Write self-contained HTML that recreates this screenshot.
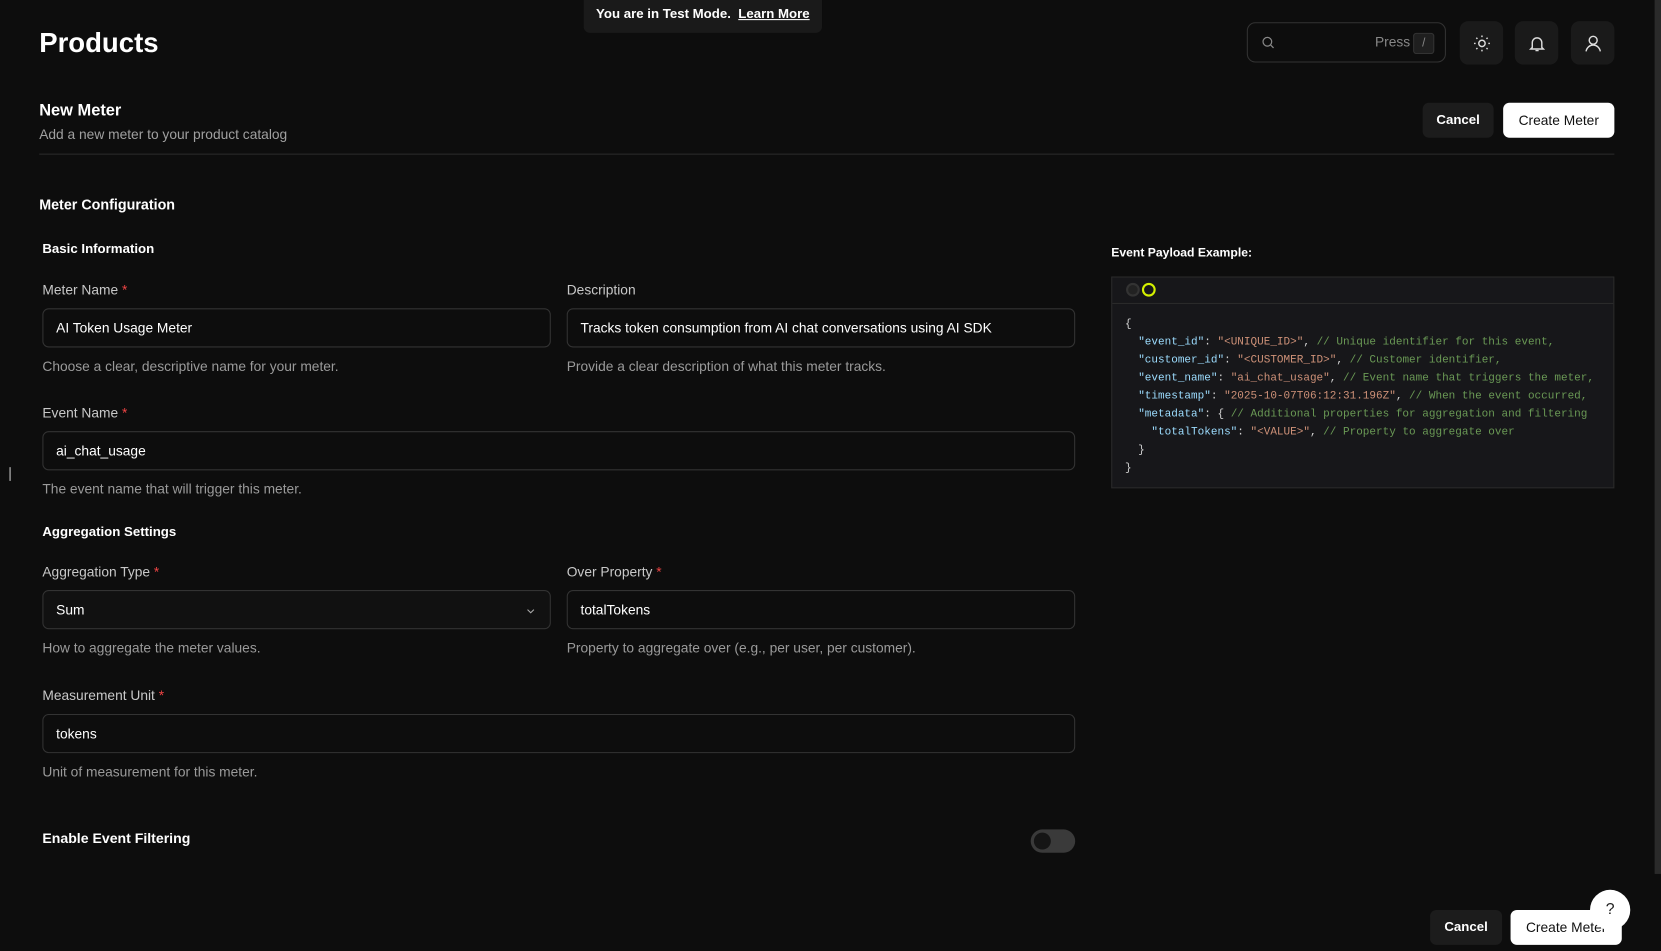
<!DOCTYPE html>
<html><head><meta charset="utf-8"><style>
html,body{margin:0;padding:0;background:#0d0d0d;overflow:hidden;width:1661px;height:951px}
#w{position:absolute;left:0;top:0;width:1568px;height:898px;transform:scale(1.0593);transform-origin:0 0;font-family:"Liberation Sans",sans-serif;color:#fff}
.a{position:absolute;white-space:nowrap}
.lbl{font-size:13px;color:#c8c8c8}
.lbl b{color:#ef4444;font-weight:normal}
.help{font-size:13px;color:#9a9a9a}
.inp{position:absolute;border:1px solid #333;border-radius:6px;background:#0d0d0d;font-size:13px;line-height:35px;padding-left:12px;box-sizing:border-box;height:37px}
.sec{font-size:12.5px;font-weight:bold}
.btn{position:absolute;border-radius:6px;font-size:13px;font-weight:bold;text-align:center}
.ib{position:absolute;top:20px;width:41px;height:41px;background:#1a1a1a;border-radius:8px;display:flex;align-items:center;justify-content:center}
pre{margin:0;font-family:"Liberation Mono",monospace;font-size:10.4px;line-height:17px;color:#d4d4d4}
.k{color:#9cdcfe}.s{color:#ce9178}.c{color:#6a9955}
</style></head><body><div id="w">
<div class="a" style="left:1562px;top:0;width:6px;height:825px;background:#2a2a2a"></div>
<div class="a" style="left:551px;top:0;width:225px;height:31px;background:#1a1a1a;border-radius:0 0 6px 6px;font-size:12.5px;font-weight:bold;line-height:27px;text-align:center">You are in Test Mode. &nbsp;<u>Learn More</u></div>
<div class="a" style="left:37px;top:25px;font-size:26px;font-weight:bold">Products</div>
<div class="a" style="left:1177px;top:21px;width:188px;height:38px;border:1px solid #333;border-radius:8px;box-sizing:border-box">
<svg style="position:absolute;left:12px;top:11px" width="14" height="14" viewBox="0 0 24 24" fill="none" stroke="#888" stroke-width="2"><circle cx="11" cy="11" r="7"/><path d="M16 16l5 5"/></svg>
<span class="a" style="left:120px;top:10px;font-size:13px;color:#888">Press</span>
<span class="a" style="left:156px;top:9px;width:18px;height:18px;background:#1f1f1f;border:1px solid #333;border-radius:3px;font-size:11px;color:#888;text-align:center;line-height:18px">/</span></div>
<div class="ib" style="left:1378px"><svg width="18" height="18" viewBox="0 0 24 24" fill="none" stroke="#ddd" stroke-width="1.8"><circle cx="12" cy="12" r="4"/><path d="M12 2v2M12 20v2M2 12h2M20 12h2M4.9 4.9l1.4 1.4M17.7 17.7l1.4 1.4M4.9 19.1l1.4-1.4M17.7 6.3l1.4-1.4"/></svg></div>
<div class="ib" style="left:1430px"><svg width="18" height="18" viewBox="0 0 24 24" fill="none" stroke="#ddd" stroke-width="1.8"><path d="M6 17V11a6 6 0 0 1 12 0v6l2 2H4z"/><path d="M10 21h4"/></svg></div>
<div class="ib" style="left:1483px"><svg width="18" height="18" viewBox="0 0 24 24" fill="none" stroke="#ddd" stroke-width="1.8"><circle cx="12" cy="8" r="5"/><path d="M3 22c1-5 5-8 9-8s8 3 9 8"/></svg></div>
<div class="a" style="left:37px;top:96px;font-size:15.5px;font-weight:bold">New Meter</div>
<div class="a" style="left:37px;top:119px;font-size:13px;color:#a0a0a0">Add a new meter to your product catalog</div>
<div class="btn" style="left:1343px;top:97px;width:67px;height:33px;line-height:33px;background:#1c1c1c;font-size:12.5px">Cancel</div>
<div class="btn" style="left:1419px;top:97px;width:105px;height:33px;line-height:33px;background:#fff;color:#111;font-weight:normal">Create Meter</div>
<div class="a" style="left:37px;top:145px;width:1487px;height:1px;background:#2a2a2a"></div>
<div class="a" style="left:37px;top:186px;font-size:13.5px;font-weight:bold">Meter Configuration</div>
<div class="a sec" style="left:40px;top:228px">Basic Information</div>
<div class="a lbl" style="left:40px;top:266px">Meter Name <b>*</b></div>
<div class="a lbl" style="left:535px;top:266px">Description</div>
<div class="inp" style="left:40px;top:291px;width:480px">AI Token Usage Meter</div>
<div class="inp" style="left:535px;top:291px;width:480px">Tracks token consumption from AI chat conversations using AI SDK</div>
<div class="a help" style="left:40px;top:338px">Choose a clear, descriptive name for your meter.</div>
<div class="a help" style="left:535px;top:338px">Provide a clear description of what this meter tracks.</div>
<div class="a lbl" style="left:40px;top:382px">Event Name <b>*</b></div>
<div class="inp" style="left:40px;top:407px;width:975px">ai_chat_usage</div>
<div class="a help" style="left:40px;top:454px">The event name that will trigger this meter.</div>
<div class="a" style="left:9px;top:441px;width:1px;height:13px;background:#ccc"></div>
<div class="a sec" style="left:40px;top:495px">Aggregation Settings</div>
<div class="a lbl" style="left:40px;top:532px">Aggregation Type <b>*</b></div>
<div class="a lbl" style="left:535px;top:532px">Over Property <b>*</b></div>
<div class="inp" style="left:40px;top:557px;width:480px;background:#111">Sum<svg style="position:absolute;right:12px;top:13px" width="12" height="12" viewBox="0 0 24 24" fill="none" stroke="#aaa" stroke-width="2"><path d="M6 9l6 6 6-6"/></svg></div>
<div class="inp" style="left:535px;top:557px;width:480px">totalTokens</div>
<div class="a help" style="left:40px;top:604px">How to aggregate the meter values.</div>
<div class="a help" style="left:535px;top:604px">Property to aggregate over (e.g., per user, per customer).</div>
<div class="a lbl" style="left:40px;top:649px">Measurement Unit <b>*</b></div>
<div class="inp" style="left:40px;top:674px;width:975px">tokens</div>
<div class="a help" style="left:40px;top:721px">Unit of measurement for this meter.</div>
<div class="a" style="left:40px;top:784px;font-size:13.3px;font-weight:bold">Enable Event Filtering</div>
<div class="a" style="left:973px;top:783px;width:42px;height:22px;border-radius:11px;background:#3a3a3a"><div style="position:absolute;left:3px;top:3px;width:16px;height:16px;border-radius:50%;background:#151515"></div></div>
<div class="a" style="left:1049px;top:233px;font-size:11.5px;font-weight:bold">Event Payload Example:</div>
<div class="a" style="left:1049px;top:261px;width:475px;height:200px;background:#17171a;border:1px solid #2a2a2a;box-sizing:border-box">
<div style="height:24px;border-bottom:1px solid #2a2a2a;position:relative">
<div class="a" style="left:13px;top:5px;width:9px;height:9px;border-radius:50%;border:2px solid #333;background:#222"></div>
<div class="a" style="left:28px;top:5px;width:9px;height:9px;border-radius:50%;border:2px solid #d4f000"></div></div>
<pre style="position:absolute;left:12px;top:36px">{
  <span class="k">"event_id"</span>: <span class="s">"&lt;UNIQUE_ID&gt;"</span>, <span class="c">// Unique identifier for this event,</span>
  <span class="k">"customer_id"</span>: <span class="s">"&lt;CUSTOMER_ID&gt;"</span>, <span class="c">// Customer identifier,</span>
  <span class="k">"event_name"</span>: <span class="s">"ai_chat_usage"</span>, <span class="c">// Event name that triggers the meter,</span>
  <span class="k">"timestamp"</span>: <span class="s">"2025-10-07T06:12:31.196Z"</span>, <span class="c">// When the event occurred,</span>
  <span class="k">"metadata"</span>: { <span class="c">// Additional properties for aggregation and filtering</span>
    <span class="k">"totalTokens"</span>: <span class="s">"&lt;VALUE&gt;"</span>, <span class="c">// Property to aggregate over</span>
  }
}</pre></div>
<div class="btn" style="left:1350px;top:859px;width:68px;height:33px;line-height:33px;background:#1c1c1c;font-size:12.5px">Cancel</div>
<div class="btn" style="left:1426px;top:859px;width:105px;height:33px;line-height:33px;background:#fff;color:#111;font-weight:normal">Create Meter</div>
<div class="a" style="left:1501px;top:840px;width:38px;height:38px;border-radius:50%;background:#fff;color:#222;font-size:15px;text-align:center;line-height:38px">?</div>
</div></body></html>
